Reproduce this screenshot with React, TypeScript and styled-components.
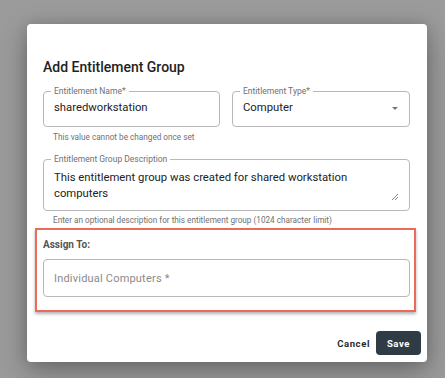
import styled, { createGlobalStyle } from "styled-components";

const GlobalStyle = createGlobalStyle`
  html, body {
    margin: 0;
    padding: 0;
    background: #9b9b9b;
    font-family: "Roboto", "Liberation Sans", sans-serif;
  }
`;

function App() {
  return (
    <>
      <GlobalStyle />
      <Backdrop>
        <Dialog>
          <Content>
            <Title>Add Entitlement Group</Title>
            <Row>
              <FieldBox>
                <Outline>
                  <Legend>Entitlement Name*</Legend>
                  <Value>sharedworkstation</Value>
                </Outline>
                <Helper>This value cannot be changed once set</Helper>
              </FieldBox>
              <FieldBox>
                <Outline>
                  <Legend>Entitlement Type*</Legend>
                  <SelectRow>
                    <Value>Computer</Value>
                    <Caret />
                  </SelectRow>
                </Outline>
              </FieldBox>
            </Row>
            <FieldBox $gap={11}>
              <Outline $multiline>
                <Legend>Entitlement Group Description</Legend>
                <Value $multiline>
                  This entitlement group was created for shared workstation
                  computers
                </Value>
                <Resize width="8" height="8" viewBox="0 0 8 8">
                  <path d="M7 1 L1 7 M7 4 L4 7" stroke="#777" strokeWidth="0.9" />
                </Resize>
              </Outline>
              <Helper $tight>
                Enter an optional description for this entitlement group (1024
                character limit)
              </Helper>
            </FieldBox>
            <Highlight>
              <SectionLabel>Assign To:</SectionLabel>
              <PlainInput>Individual Computers *</PlainInput>
            </Highlight>
          </Content>
          <Actions>
            <TextButton>Cancel</TextButton>
            <SaveButton>Save</SaveButton>
          </Actions>
        </Dialog>
      </Backdrop>
    </>
  );
}

export default App;

const Backdrop = styled.div`
  height: 378px;
  box-sizing: border-box;
  padding: 24px 0 0 27px;
  overflow: hidden;
`;

const Dialog = styled.div`
  width: 400px;
  height: 338px;
  box-sizing: border-box;
  background: #fff;
  border-radius: 4px;
  box-shadow: 0 11px 30px rgba(0, 0, 0, 0.28), 0 0 14px rgba(0, 0, 0, 0.14);
  display: flex;
  flex-direction: column;
`;

const Content = styled.div`
  padding: 33px 17px 0 16px;
`;

const Title = styled.h2`
  margin: 0 0 9px;
  font-size: 14px;
  line-height: 20px;
  font-weight: 500;
  color: #222;
`;

const Row = styled.div`
  display: grid;
  grid-template-columns: 177px 178px;
  gap: 12px;
`;

const FieldBox = styled.div<{ $gap?: number }>`
  margin-top: ${(p) => p.$gap ?? 0}px;
`;

const Outline = styled.fieldset<{ $multiline?: boolean }>`
  position: relative;
  margin: 0;
  min-width: 0;
  padding: ${(p) => (p.$multiline ? "6px 10px 8px" : "4px 10px 10px")};
  border: 1px solid #b8b8b8;
  border-radius: 4px;
`;

const Legend = styled.legend`
  margin-left: -3px;
  padding: 0 3px;
  font-size: 8.5px;
  line-height: 10px;
  color: #707070;
`;

const Value = styled.div<{ $multiline?: boolean }>`
  font-size: 11.3px;
  line-height: 16px;
  color: #222;
  padding-right: ${(p) => (p.$multiline ? "40px" : "0")};
`;

const SelectRow = styled.div`
  display: flex;
  align-items: center;
  justify-content: space-between;
  padding-right: 1px;
`;

const Caret = styled.span`
  width: 0;
  height: 0;
  border-left: 3px solid transparent;
  border-right: 3px solid transparent;
  border-top: 3px solid #777;
`;

const Resize = styled.svg`
  position: absolute;
  right: 10px;
  bottom: 9px;
`;

const Helper = styled.div<{ $tight?: boolean }>`
  margin-top: ${(p) => (p.$tight ? "4px" : "5px")};
  padding-left: 10px;
  font-size: 8.2px;
  line-height: 11px;
  color: #707070;
`;

const Highlight = styled.div`
  margin: 2px -6px 0 -8px;
  padding: 8px 4px 13px 6px;
  border: 2px solid #ec6a5c;
  box-shadow: 0 2px 3px rgba(0, 0, 0, 0.3);
`;

const SectionLabel = styled.div`
  font-size: 10px;
  line-height: 14px;
  font-weight: 700;
  color: #555;
`;

const PlainInput = styled.div`
  margin-top: 7px;
  height: 38px;
  box-sizing: border-box;
  padding: 0 10px;
  display: flex;
  align-items: center;
  border: 1px solid #b8b8b8;
  border-radius: 4px;
  font-size: 11px;
  color: #8a8a8a;
  letter-spacing: 0.2px;
`;

const Actions = styled.div`
  margin-top: auto;
  display: flex;
  justify-content: flex-end;
  align-items: center;
  gap: 6px;
  padding: 0 6px 7px;
`;

const TextButton = styled.button`
  border: none;
  background: none;
  padding: 0;
  font-family: "Roboto", "Liberation Sans", sans-serif;
  font-size: 9.5px;
  font-weight: 700;
  letter-spacing: 0.6px;
  color: #2a2a2a;
`;

const SaveButton = styled.button`
  width: 45px;
  height: 24px;
  border: none;
  border-radius: 4px;
  background: #2f3b45;
  color: #fff;
  font-family: "Roboto", "Liberation Sans", sans-serif;
  font-size: 9.5px;
  font-weight: 700;
  letter-spacing: 0.6px;
`;
